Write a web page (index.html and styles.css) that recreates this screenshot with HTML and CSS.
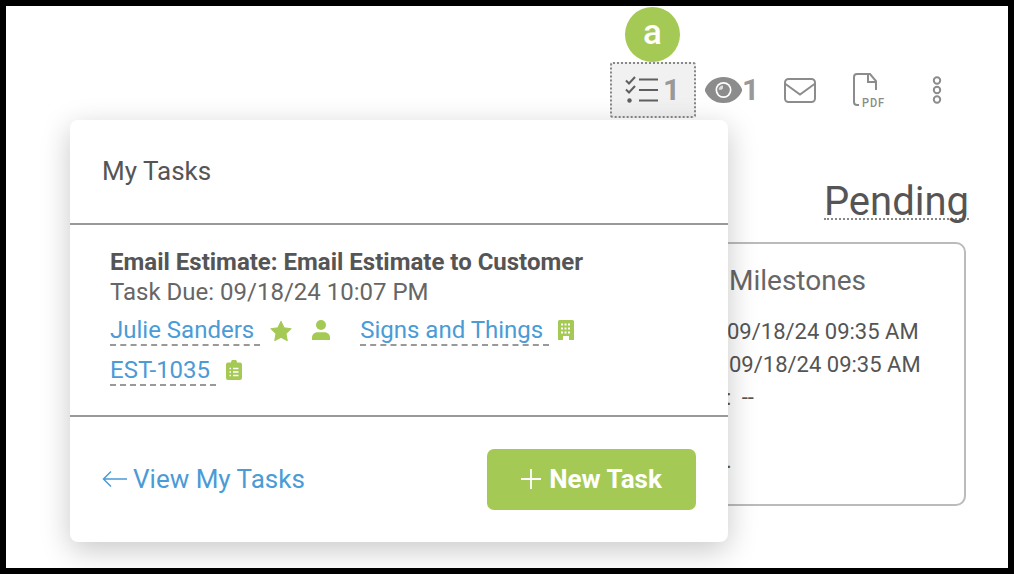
FILE: index.html
```html
<!DOCTYPE html>
<html lang="en">
<head>
  <meta charset="UTF-8">
  <title>My Tasks</title>
  <link rel="stylesheet" href="styles.css">
</head>
<body>
<div class="frame">

  <div class="toolbar">
    <span class="badge">a</span>
    <div class="tool tool-tasks">
      <svg width="34" height="28" viewBox="0 0 34 28" fill="none" stroke="#5f5f5f">
        <path d="M1 4.500l3 3 6-6.500M1 13.500l3 3 6-6.500" stroke-width="2"/>
        <path d="M14 3.500h19M14 14h19M14 24.500h19" stroke-width="2"/>
        <circle cx="4.500" cy="24.500" r="2.200" fill="#5f5f5f" stroke="none"/>
      </svg>
      <span class="count">1</span>
    </div>
    <div class="tool tool-views">
      <svg width="37" height="26" viewBox="0 0 37 26">
        <path fill="#8c8c8c" d="M18.500 0C28 0 33.500 5 36.500 11a4 4 0 0 1 0 4C33.500 21 28 26 18.500 26S3.500 21 .5 15a4 4 0 0 1 0-4C3.500 5 9 0 18.500 0z"/>
        <circle cx="18.500" cy="13" r="8" fill="#fff"/>
        <circle cx="18.500" cy="13" r="6.300" fill="#8c8c8c"/>
        <path fill="#ddd" d="M18 8.500a4.500 4.500 0 0 0-4.300 4.300h3a2 2 0 0 1 1.300-1.300z"/>
      </svg>
      <span class="count">1</span>
    </div>
    <div class="tool tool-mail">
      <svg width="32" height="25" viewBox="0 0 32 25" fill="none" stroke="#8c8c8c" stroke-width="2">
        <rect x="1" y="1" width="30" height="23" rx="3.500"/>
        <path d="M1.500 6L16 16.500 30.500 6"/>
      </svg>
    </div>
    <div class="tool tool-pdf">
      <svg width="34" height="34" viewBox="0 0 34 34" fill="none" stroke="#8c8c8c" stroke-width="2">
        <path d="M6 32H4a3 3 0 0 1-3-3V4a3 3 0 0 1 3-3h13l6 7v9M15 1v8h8"/>
      </svg>
      <span class="pdf-label">PDF</span>
    </div>
    <div class="tool tool-more">
      <svg width="10" height="28" viewBox="0 0 10 28" fill="none" stroke="#8c8c8c" stroke-width="2">
        <circle cx="5" cy="4.500" r="3.200"/>
        <circle cx="5" cy="14" r="3.200"/>
        <circle cx="5" cy="23.500" r="3.200"/>
      </svg>
    </div>
  </div>

  <div class="status-row">
    <span class="status">Pending</span>
  </div>

  <div class="milestones">
    <h3>Milestones</h3>
    <p class="row-a">09/18/24 09:35 AM</p>
    <p class="row-b">09/18/24 09:35 AM</p>
    <p class="row-c">: --</p>
    <p class="row-d">.</p>
  </div>

  <div class="popover">
    <div class="pop-head">My Tasks</div>
    <div class="pop-body">
      <div class="task-title">Email Estimate: Email Estimate to Customer</div>
      <div class="task-due">Task Due: 09/18/24 10:07 PM</div>
      <div class="task-links">
        <a class="link link-contact">Julie Sanders</a>
        <svg class="ico-star" width="22" height="21" viewBox="0 0 24 23"><path fill="#a5c955" stroke="#a5c955" stroke-width="1.200" stroke-linejoin="round" d="M12 1.500l3.300 7 7.700 1-5.600 5.300 1.400 7.700L12 18.800l-6.800 3.700 1.400-7.700L1 9.500l7.700-1z"/></svg>
        <svg class="ico-person" width="20" height="20" viewBox="0 0 20 20"><circle cx="10" cy="5" r="5" fill="#a5c955"/><path fill="#a5c955" d="M1 20v-2.500C1 14 4 12.300 7 12.300h6c3 0 6 1.700 6 5.200V20z"/></svg>
        <a class="link link-company">Signs and Things</a>
        <svg class="ico-building" width="16" height="20" viewBox="0 0 16 20"><path fill="#a5c955" d="M1.500 0h13A1.500 1.500 0 0 1 16 1.500V20h-5v-4H5v4H0V1.500A1.500 1.500 0 0 1 1.500 0z"/><path stroke="#fff" stroke-width="2" stroke-dasharray="2 1.500" d="M3 4.500h10M3 8.500h10M3 12.500h10"/></svg>
      </div>
      <div class="task-links">
        <a class="link link-estimate">EST-1035</a>
        <svg class="ico-clip" width="16" height="20" viewBox="0 0 16 20"><path fill="#a5c955" d="M5 2.500a3 3 0 0 1 6 0h3a2 2 0 0 1 2 2V18a2 2 0 0 1-2 2H2a2 2 0 0 1-2-2V4.500a2 2 0 0 1 2-2z"/><path stroke="#fff" stroke-width="1.500" d="M3.500 8.500h1.500M7 8.500h5.500M3.500 12h1.500M7 12h5.500M3.500 15.500h1.500M7 15.500h5.500"/></svg>
      </div>
    </div>
    <div class="pop-foot">
      <a class="view-all">
        <svg width="25" height="18" viewBox="0 0 25 18" fill="none" stroke="#4a9bd6" stroke-width="1.500"><path d="M25 9H1.500M9 1.500L1.500 9 9 16.500"/></svg>
        View My Tasks
      </a>
      <button class="new-task">
        <svg width="20" height="20" viewBox="0 0 20 20" stroke="#fff" stroke-width="1.800"><path d="M10 0v20M0 10h20"/></svg>
        New Task
      </button>
    </div>
  </div>

</div>
</body>
</html>
```

FILE: styles.css
```css
* {
  box-sizing: border-box;
}

body {
  margin: 0;
  background: #000;
  font-family: Roboto, "Liberation Sans", sans-serif;
  color: #555;
}

.frame {
  position: relative;
  width: 1002px;
  height: 562px;
  margin: 6px 0 0 6px;
  background: #fff;
  overflow: hidden;
}

.toolbar {
  display: flex;
  align-items: center;
  height: 56px;
  margin: 56px 0 0 604px;
}

.tool {
  display: flex;
  align-items: center;
  color: #999;
}

.tool-tasks {
  width: 86px;
  height: 56px;
  padding: 0 0 1px 13px;
  gap: 4px;
  background: #f1f1f1;
  border: 2px dotted #888;
  border-radius: 3px;
}

.tool-views {
  margin-left: 9px;
  gap: 0;
  padding-bottom: 1px;
}

.tool-mail {
  margin-left: 25px;
}

.tool-pdf {
  position: relative;
  margin-left: 37px;
}

.tool-more {
  margin-left: 45px;
}

.count {
  font-size: 30px;
  font-weight: 700;
  line-height: 1;
}

.pdf-label {
  position: absolute;
  right: 2px;
  bottom: -2px;
  font-size: 13px;
  font-weight: 500;
  letter-spacing: 1px;
  line-height: 1;
  color: #8c8c8c;
  background: #fff;
  padding-left: 2px;
  transform: scaleX(.85);
  transform-origin: right;
}

.badge {
  position: absolute;
  left: 619px;
  top: 1px;
  width: 55px;
  height: 55px;
  border-radius: 50%;
  background: #a5c955;
  color: #fff;
  font-size: 35px;
  font-weight: 500;
  line-height: 52px;
  text-align: center;
}

.status-row {
  display: flex;
  justify-content: flex-end;
  margin: 63px 39px 0 0;
}

.status {
  font-size: 40px;
  line-height: 42px;
  height: 39px;
  border-bottom: 2px dotted #888;
}

.milestones {
  width: 500px;
  height: 264px;
  margin: 22px 0 0 460px;
  padding: 19px 0 0 261px;
  border: 2px solid #bbb;
  border-radius: 10px;
}

.milestones h3 {
  margin: 0 0 16px;
  font-size: 28px;
  font-weight: 400;
  line-height: 36px;
  white-space: nowrap;
  color: #666;
}

.milestones p {
  margin: 0;
  font-size: 22px;
  line-height: 33px;
  white-space: nowrap;
}

.row-a {
  margin-left: -2px !important;
}

.row-b {
  margin-left: 0 !important;
}

.row-c {
  margin-left: -3px !important;
  word-spacing: 5px;
}

.row-d {
  margin: 30px 0 0 -3px !important;
}

.popover {
  position: absolute;
  left: 64px;
  top: 114px;
  width: 658px;
  height: 422px;
  background: #fff;
  border-radius: 8px;
  box-shadow: 0 8px 30px rgba(0, 0, 0, .22);
  display: flex;
  flex-direction: column;
}

.pop-head {
  height: 105px;
  padding: 33px 0 0 32px;
  font-size: 26px;
  line-height: 36px;
  border-bottom: 2px solid #999;
}

.pop-body {
  height: 192px;
  padding: 22px 0 0 40px;
  border-bottom: 2px solid #999;
}

.task-title {
  font-size: 24px;
  font-weight: 700;
  line-height: 30px;
}

.task-due {
  font-size: 24px;
  line-height: 30px;
  color: #666;
}

.task-links {
  display: flex;
  align-items: center;
  height: 40px;
  margin-top: 3px;
}

.task-links + .task-links {
  margin-top: 0;
}

.link {
  height: 32px;
  font-size: 24px;
  line-height: 32px;
  color: #4a9bd6;
  padding-right: 6px;
  border-bottom: 2px dashed #999;
}

.ico-star {
  margin-left: 10px;
}

.ico-person {
  margin-left: 19px;
}

.link-company {
  margin-left: 29px;
}

.ico-building {
  margin-left: 9px;
}

.ico-clip {
  margin-left: 10px;
}

.pop-foot {
  flex: 1;
  display: flex;
  align-items: center;
  justify-content: space-between;
  padding: 0 32px;
}

.view-all {
  display: flex;
  align-items: center;
  gap: 6px;
  font-size: 26px;
  color: #4a9bd6;
  padding-bottom: 2px;
}

.new-task {
  display: flex;
  align-items: center;
  justify-content: center;
  gap: 8px;
  width: 209px;
  height: 61px;
  padding: 0 0 2px;
  border: 0;
  border-radius: 7px;
  background: #a5c955;
  color: #fff;
  font-family: inherit;
  font-size: 26px;
  font-weight: 700;
}
```
